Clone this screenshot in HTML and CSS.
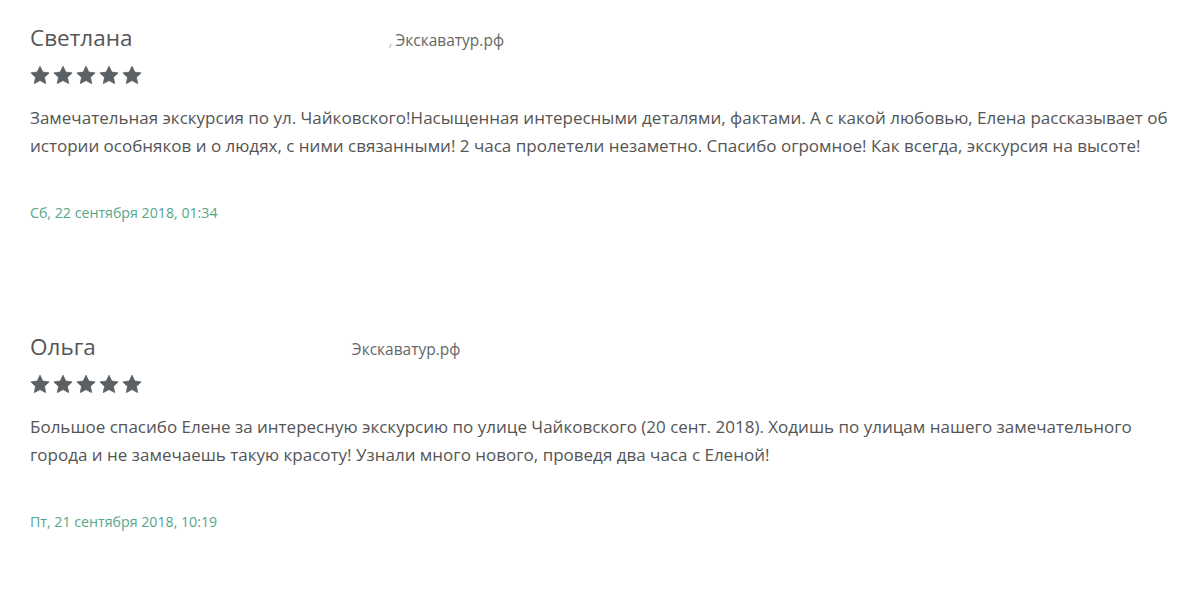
FILE: index.html
```html
<!DOCTYPE html>
<html lang="ru">
<head>
    <meta charset="UTF-8">
    <title>Отзывы</title>
    <link rel="stylesheet" href="styles.css">
</head>
<body>
    <div class="reviews">
        <div class="review">
            <div class="review-head">
                <span class="review-name">Светлана</span>
                <span class="review-site"><span class="comma">,</span>Экскаватур.рф</span>
            </div>
            <div class="stars">
                <svg viewBox="0 0 24 24"><path d="M12 1.5L15.3 8.5L22.9 9.5L17.3 14.7L18.8 22.3L12 18.6L5.2 22.3L6.7 14.7L1.1 9.5L8.7 8.5Z"/></svg>
                <svg viewBox="0 0 24 24"><path d="M12 1.5L15.3 8.5L22.9 9.5L17.3 14.7L18.8 22.3L12 18.6L5.2 22.3L6.7 14.7L1.1 9.5L8.7 8.5Z"/></svg>
                <svg viewBox="0 0 24 24"><path d="M12 1.5L15.3 8.5L22.9 9.5L17.3 14.7L18.8 22.3L12 18.6L5.2 22.3L6.7 14.7L1.1 9.5L8.7 8.5Z"/></svg>
                <svg viewBox="0 0 24 24"><path d="M12 1.5L15.3 8.5L22.9 9.5L17.3 14.7L18.8 22.3L12 18.6L5.2 22.3L6.7 14.7L1.1 9.5L8.7 8.5Z"/></svg>
                <svg viewBox="0 0 24 24"><path d="M12 1.5L15.3 8.5L22.9 9.5L17.3 14.7L18.8 22.3L12 18.6L5.2 22.3L6.7 14.7L1.1 9.5L8.7 8.5Z"/></svg>
            </div>
            <p class="review-text">Замечательная экскурсия по ул. Чайковского!Насыщенная интересными деталями, фактами. А с какой любовью, Елена рассказывает об истории особняков и о людях, с ними связанными! 2 часа пролетели незаметно. Спасибо огромное! Как всегда, экскурсия на высоте!</p>
            <div class="review-date">Сб, 22 сентября 2018, 01:34</div>
        </div>

        <div class="review">
            <div class="review-head">
                <span class="review-name">Ольга</span>
                <span class="review-site">Экскаватур.рф</span>
            </div>
            <div class="stars">
                <svg viewBox="0 0 24 24"><path d="M12 1.5L15.3 8.5L22.9 9.5L17.3 14.7L18.8 22.3L12 18.6L5.2 22.3L6.7 14.7L1.1 9.5L8.7 8.5Z"/></svg>
                <svg viewBox="0 0 24 24"><path d="M12 1.5L15.3 8.5L22.9 9.5L17.3 14.7L18.8 22.3L12 18.6L5.2 22.3L6.7 14.7L1.1 9.5L8.7 8.5Z"/></svg>
                <svg viewBox="0 0 24 24"><path d="M12 1.5L15.3 8.5L22.9 9.5L17.3 14.7L18.8 22.3L12 18.6L5.2 22.3L6.7 14.7L1.1 9.5L8.7 8.5Z"/></svg>
                <svg viewBox="0 0 24 24"><path d="M12 1.5L15.3 8.5L22.9 9.5L17.3 14.7L18.8 22.3L12 18.6L5.2 22.3L6.7 14.7L1.1 9.5L8.7 8.5Z"/></svg>
                <svg viewBox="0 0 24 24"><path d="M12 1.5L15.3 8.5L22.9 9.5L17.3 14.7L18.8 22.3L12 18.6L5.2 22.3L6.7 14.7L1.1 9.5L8.7 8.5Z"/></svg>
            </div>
            <p class="review-text">Большое спасибо Елене за интересную экскурсию по улице Чайковского (20 сент. 2018). Ходишь по улицам нашего замечательного города и не замечаешь такую красоту! Узнали много нового, проведя два часа с Еленой!</p>
            <div class="review-date">Пт, 21 сентября 2018, 10:19</div>
        </div>
    </div>
</body>
</html>
```

FILE: styles.css
```css
body {
    margin: 0;
    padding: 0;
    font-family: 'Open Sans', 'Noto Sans', sans-serif;
    color: #555;
    background: #fff;
    overflow: hidden;
}

.reviews {
    padding: 22px 30px 0;
}

.review {
    height: 309px;
}

.review-head {
    display: flex;
    align-items: baseline;
}

.review-name {
    font-size: 22.5px;
    color: #555;
}

.review-site {
    margin-left: 256px;
    font-size: 15.5px;
    color: #666;
}

.comma {
    color: #bbb;
    margin-right: 3px;
}

.stars {
    display: flex;
    gap: 3px;
    margin-top: 12px;
}

.stars svg {
    width: 20px;
    height: 20px;
    fill: #5b6064;
    stroke: #5b6064;
    stroke-width: 1;
    stroke-linejoin: round;
}

.review-text {
    margin: 19px 0 0;
    font-size: 17px;
    line-height: 28px;
    max-width: 1150px;
}

.review-date {
    margin-top: 43px;
    font-size: 14.2px;
    color: #55a58b;
}
```
